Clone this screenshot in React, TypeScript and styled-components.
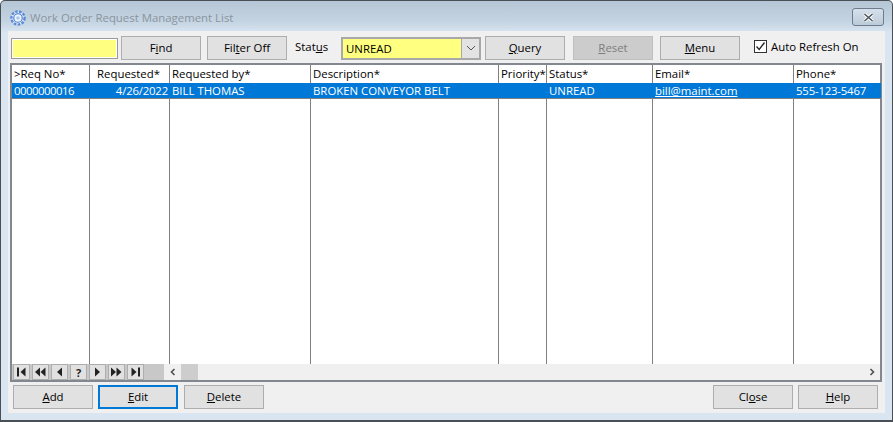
import React from 'react'
import styled, { createGlobalStyle } from 'styled-components'

const GlobalStyle = createGlobalStyle`
  html, body {
    margin: 0;
    padding: 0;
    width: 893px;
    height: 422px;
    overflow: hidden;
    background: #fff;
  }
  * { box-sizing: border-box; }
`

const Window = styled.div`
  width: 893px;
  height: 422px;
  display: flex;
  flex-direction: column;
  border: 1px solid #4a4f55;
  border-bottom-width: 2px;
  border-radius: 5px 5px 0 0;
  background: linear-gradient(180deg, #b5c6d6 0, #c4d3e1 20px, #d9e6f2 32px, #d9e6f2 100%);
  padding: 0 7px 7px 7px;
  font-family: "Open Sans", "Noto Sans", sans-serif;
  font-size: 11.4px;
  color: #000;
`

const TitleBar = styled.div`
  height: 30px;
  flex: none;
  display: flex;
  align-items: center;
  gap: 3px;
  padding: 3px 0 0 1px;
`

const AppIcon = styled.svg`
  width: 18px;
  height: 18px;
  flex: none;
`

const Title = styled.span`
  color: #8a949e;
  font-size: 11.4px;
  flex: 1;
`

const CloseBox = styled.div`
  width: 32px;
  height: 18px;
  margin: -1px 1px 0 0;
  border: 1px solid #6d7c8c;
  border-radius: 3px;
  background: linear-gradient(180deg, #d5e0ea, #bccbd9);
  display: flex;
  align-items: center;
  justify-content: center;
`

const Client = styled.div`
  flex: 1;
  background: #f0f0f0;
  display: flex;
  flex-direction: column;
  padding: 5px 3px 5px 2px;
  min-height: 0;
`

const Toolbar = styled.div`
  height: 24px;
  flex: none;
  display: flex;
  align-items: center;
  margin-bottom: 3px;
`

const FindInput = styled.div`
  width: 107px;
  height: 21px;
  margin: 1px 3px 0 1px;
  background: #ffff80;
  border: 1px solid #9a9a9a;
  box-shadow: inset 0 0 0 1px #fff;
`

const Btn = styled.button<{ $disabled?: boolean; $focused?: boolean; $ml?: number }>`
  width: 80px;
  height: 24px;
  flex: none;
  margin-left: ${(p) => p.$ml ?? 0}px;
  padding: 0 0 2px;
  font: inherit;
  color: ${(p) => (p.$disabled ? '#7d7d7d' : '#000')};
  background: ${(p) => (p.$disabled ? '#cccccc' : '#e1e1e1')};
  border: ${(p) => (p.$focused ? '2px solid #0078d7' : p.$disabled ? '1px solid #bfbfbf' : '1px solid #adadad')};
`

const StatusLabel = styled.span`
  margin: -3px 0 0 8px;
  width: 46px;
  flex: none;
`

const Combo = styled.div`
  width: 140px;
  height: 23px;
  flex: none;
  display: flex;
  border: 2px solid #a8a8a8;
  background: #ffff80;
`

const ComboText = styled.div`
  flex: 1;
  padding-left: 3px;
  line-height: 19px;
`

const ComboArrow = styled.div`
  width: 18px;
  background: #e3e3e3;
  border-left: 1px solid #a8a8a8;
  display: flex;
  align-items: center;
  justify-content: center;
`

const AutoRefresh = styled.label`
  margin: -4px 0 0 14px;
  display: flex;
  align-items: center;
  gap: 4px;
  white-space: nowrap;
`

const CheckBox = styled.div`
  width: 13px;
  height: 13px;
  border: 1px solid #333;
  background: #fff;
  display: flex;
  align-items: center;
  justify-content: center;
`

const GridFrame = styled.div`
  width: 872px;
  height: 319px;
  flex: none;
  border: 2px solid #828790;
  display: flex;
  flex-direction: column;
  background: #fff;
`

const Columns = styled.div`
  flex: 1;
  display: flex;
  min-height: 0;
`

const Column = styled.div<{ $w: number; $last?: boolean }>`
  width: ${(p) => p.$w}px;
  flex: ${(p) => (p.$last ? '1' : 'none')};
  display: flex;
  flex-direction: column;
  border-right: ${(p) => (p.$last ? 'none' : '1px solid #808080')};
`

const HeadCell = styled.div<{ $right?: boolean; $pr?: number }>`
  height: 18px;
  padding: 0 ${(p) => p.$pr ?? 2}px 0 2px;
  line-height: 18px;
  white-space: nowrap;
  text-align: ${(p) => (p.$right ? 'right' : 'left')};
`

const RowCell = styled.div<{ $right?: boolean; $spacing?: number }>`
  height: 15px;
  margin-right: -1px;
  padding: 0 2px;
  line-height: 15px;
  letter-spacing: ${(p) => p.$spacing ?? 0}px;
  white-space: nowrap;
  overflow: hidden;
  color: #fff;
  background: #0078d7;
  text-align: ${(p) => (p.$right ? 'right' : 'left')};
`

const RowLine = styled.div`
  height: 1px;
  margin-right: -1px;
  background: #808080;
`

const BottomBar = styled.div`
  height: 16px;
  flex: none;
  display: flex;
  background: #f0f0f0;
`

const Navigator = styled.div`
  width: 152px;
  flex: none;
  display: flex;
  gap: 2px;
  padding-left: 1px;
  background: #c8c8c8;
`

const NavBtn = styled.div`
  width: 17px;
  height: 16px;
  background: #e1e1e1;
  border: 1px solid #adadad;
  display: flex;
  align-items: center;
  justify-content: center;
  font-size: 11px;
  font-weight: 700;
  color: #222;
`

const ScrollTrack = styled.div`
  flex: 1;
  display: flex;
  align-items: center;
`

const ScrollArrow = styled.div`
  width: 17px;
  height: 16px;
  flex: none;
  display: flex;
  align-items: center;
  justify-content: center;
`

const Thumb = styled.div`
  width: 17px;
  height: 16px;
  flex: none;
  background: #cdcdcd;
`

const Spacer = styled.div`
  flex: 1;
`

const ActionRow = styled.div`
  margin-top: 3px;
  padding: 0 4px 0 3px;
  height: 24px;
  flex: none;
  display: flex;
`

const U = styled.span`
  text-decoration: underline;
`

const columns = [
  { head: '>Req No*', value: '0000000016', w: 78, spacing: -0.5 },
  { head: 'Requested*', value: '4/26/2022', w: 80, right: true, headPad: 9, spacing: -0.2 },
  { head: 'Requested by*', value: 'BILL THOMAS', w: 141 },
  { head: 'Description*', value: 'BROKEN CONVEYOR BELT', w: 188 },
  { head: 'Priority*', value: '', w: 48 },
  { head: 'Status*', value: 'UNREAD', w: 106 },
  { head: 'Email*', value: 'bill@maint.com', w: 141, link: true },
  { head: 'Phone*', value: '555-123-5467', w: 88, last: true, spacing: -0.2 },
]

const navKinds = ['first', 'prev2', 'prev', '?', 'next', 'next2', 'last']

const NavGlyph = ({ kind }: { kind: string }) => {
  if (kind === '?') return <>?</>
  const tri = (x: number, dir: number) => (
    <polygon points={dir > 0 ? `${x},0.5 ${x + 5},5 ${x},9.5` : `${x + 5},0.5 ${x},5 ${x + 5},9.5`} fill="#222" />
  )
  return (
    <svg width="11" height="10" viewBox="0 0 11 10">
      {kind === 'first' && <><rect x="1" y="0.5" width="2" height="9" fill="#222" />{tri(4.5, -1)}</>}
      {kind === 'prev2' && <>{tri(0, -1)}{tri(5.5, -1)}</>}
      {kind === 'prev' && tri(3, -1)}
      {kind === 'next' && tri(3, 1)}
      {kind === 'next2' && <>{tri(0, 1)}{tri(5.5, 1)}</>}
      {kind === 'last' && <>{tri(1.5, 1)}<rect x="8" y="0.5" width="2" height="9" fill="#222" /></>}
    </svg>
  )
}

const App: React.FC = () => {
  return (
    <Window>
      <GlobalStyle />
      <TitleBar>
        <AppIcon viewBox="0 0 18 18">
          <circle cx="9" cy="9" r="6.6" fill="#dbe8f8" stroke="#5b8ad6" strokeWidth="2.4" strokeDasharray="2.6 1.4" />
          <circle cx="9" cy="9" r="4.2" fill="#eef5fc" stroke="#4a7ccc" strokeWidth="1.1" />
          <circle cx="9" cy="9" r="1.8" fill="#a9c6ec" />
        </AppIcon>
        <Title>Work Order Request Management List</Title>
        <CloseBox>
          <svg width="11" height="9" viewBox="0 0 11 9">
            <path d="M1.5 1 L9.5 8 M9.5 1 L1.5 8" stroke="#fff" strokeWidth="3.4" />
            <path d="M1.5 1 L9.5 8 M9.5 1 L1.5 8" stroke="#4c5661" strokeWidth="1.6" />
          </svg>
        </CloseBox>
      </TitleBar>
      <Client>
        <Toolbar>
          <FindInput />
          <Btn>F<U>i</U>nd</Btn>
          <Btn $ml={6}>Fil<U>t</U>er Off</Btn>
          <StatusLabel>Stat<U>u</U>s</StatusLabel>
          <Combo>
            <ComboText>UNREAD</ComboText>
            <ComboArrow>
              <svg width="10" height="6" viewBox="0 0 10 6">
                <path d="M1 1 L5 5 L9 1" fill="none" stroke="#555" strokeWidth="1" />
              </svg>
            </ComboArrow>
          </Combo>
          <Btn $ml={4}><U>Q</U>uery</Btn>
          <Btn $ml={8} $disabled><U>R</U>eset</Btn>
          <Btn $ml={7}><U>M</U>enu</Btn>
          <AutoRefresh>
            <CheckBox>
              <svg width="11" height="11" viewBox="0 0 11 11">
                <path d="M1.5 5.5 L4.2 8.5 L9.5 1.5" fill="none" stroke="#222" strokeWidth="1.3" />
              </svg>
            </CheckBox>
            Auto Refresh On
          </AutoRefresh>
        </Toolbar>
        <GridFrame>
          <Columns>
            {columns.map((c) => (
              <Column key={c.head} $w={c.w} $last={c.last}>
                <HeadCell $right={c.right} $pr={c.headPad}>{c.head}</HeadCell>
                <RowCell $right={c.right} $spacing={c.spacing}>{c.link ? <U>{c.value}</U> : c.value}</RowCell>
                <RowLine />
              </Column>
            ))}
          </Columns>
          <BottomBar>
            <Navigator>
              {navKinds.map((n) => (
                <NavBtn key={n}><NavGlyph kind={n} /></NavBtn>
              ))}
            </Navigator>
            <ScrollTrack>
              <ScrollArrow>
                <svg width="8" height="8" viewBox="0 0 8 8">
                  <path d="M5.5 1 L2.5 4 L5.5 7" fill="none" stroke="#505050" strokeWidth="1.6" />
                </svg>
              </ScrollArrow>
              <Thumb />
              <Spacer />
              <ScrollArrow>
                <svg width="8" height="8" viewBox="0 0 8 8">
                  <path d="M2.5 1 L5.5 4 L2.5 7" fill="none" stroke="#505050" strokeWidth="1.6" />
                </svg>
              </ScrollArrow>
            </ScrollTrack>
          </BottomBar>
        </GridFrame>
        <ActionRow>
          <Btn><U>A</U>dd</Btn>
          <Btn $ml={5} $focused><U>E</U>dit</Btn>
          <Btn $ml={6}><U>D</U>elete</Btn>
          <Spacer />
          <Btn>Cl<U>o</U>se</Btn>
          <Btn $ml={5}><U>H</U>elp</Btn>
        </ActionRow>
      </Client>
    </Window>
  )
}

export default App
